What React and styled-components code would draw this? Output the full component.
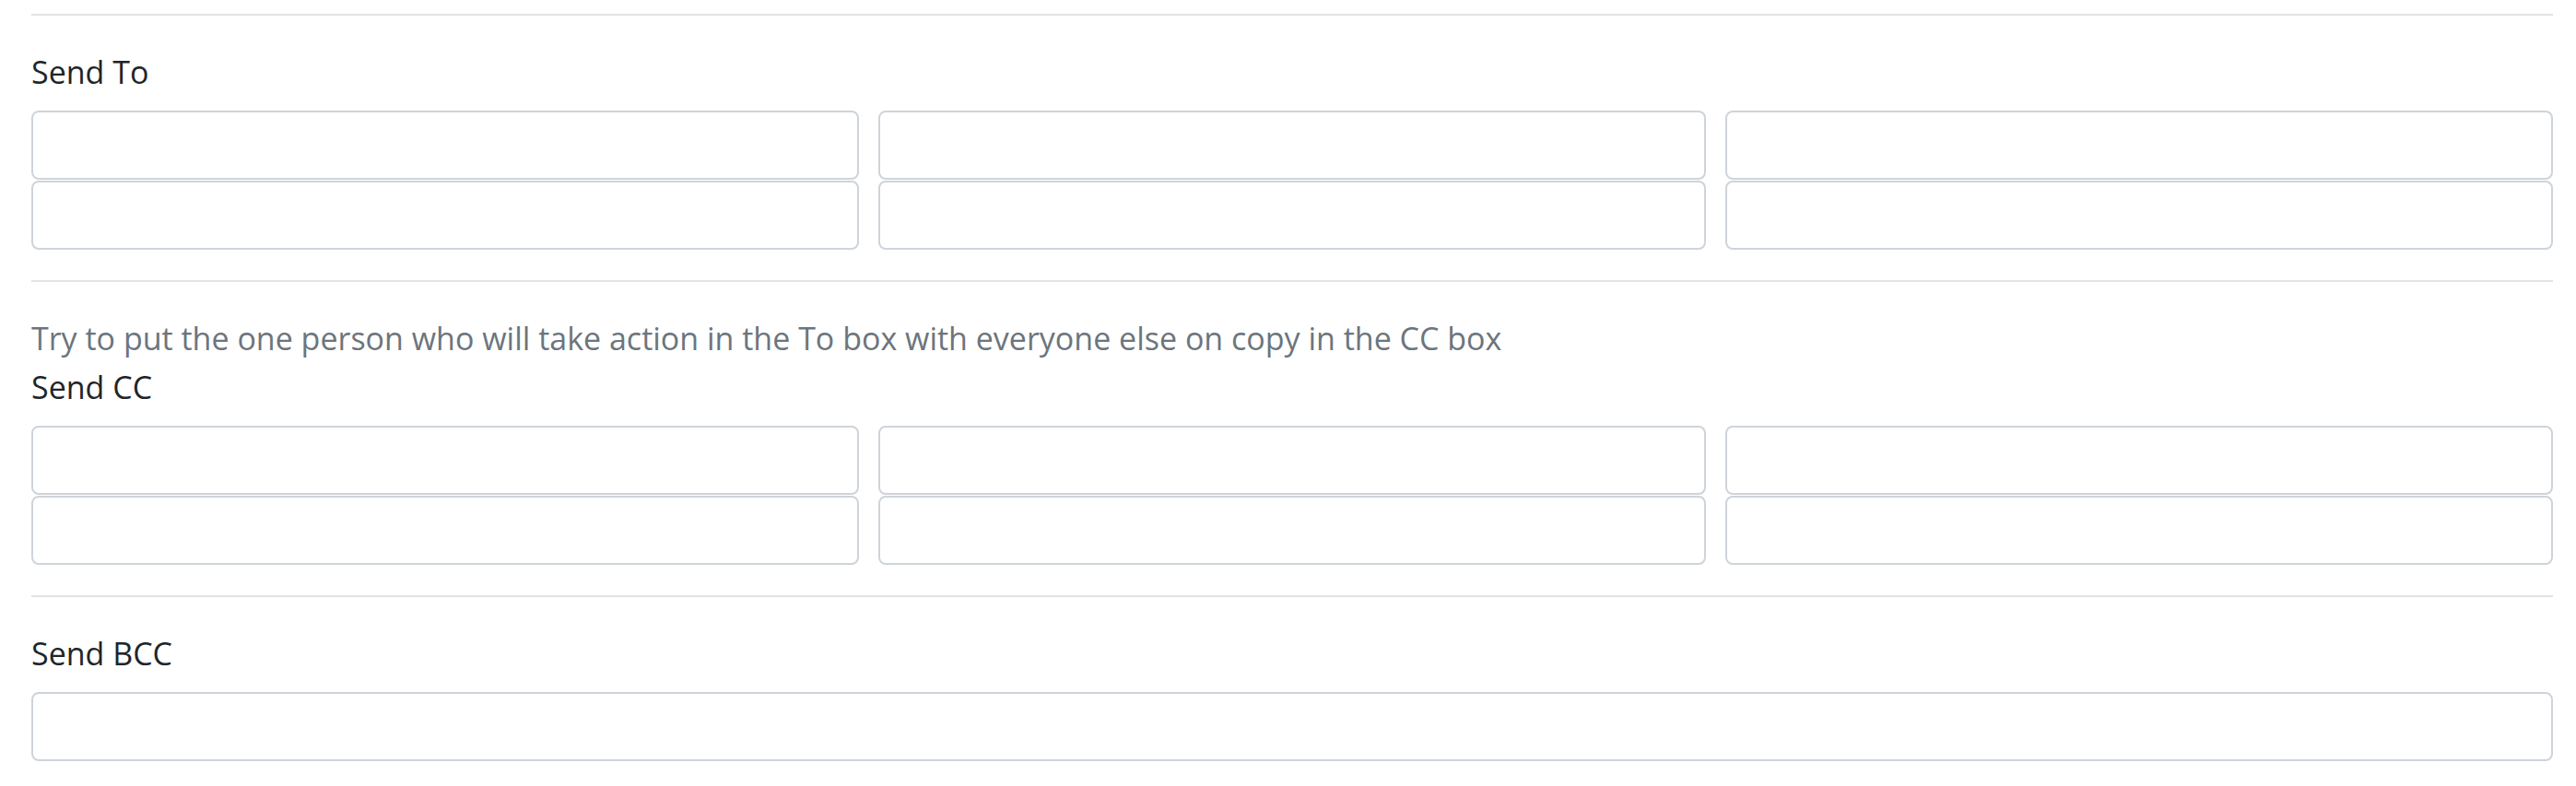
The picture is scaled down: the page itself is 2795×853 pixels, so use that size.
import React from "react";
import styled, { createGlobalStyle } from "styled-components";

const GlobalStyle = createGlobalStyle`
  html, body {
    margin: 0;
    padding: 0;
    background: #ffffff;
  }
  body {
    font-family: "Open Sans", "Noto Sans", sans-serif;
    color: #212529;
  }
`;

const Page = styled.div`
  width: 2736px;
  padding: 15px 0 0 34px;
`;

const Divider = styled.hr`
  margin: 0;
  border: 0;
  height: 2px;
  background: #e1e3e5;
`;

const Section = styled.section`
  padding: 38px 0 33px;
`;

const Hint = styled.div`
  font-size: 34px;
  line-height: 46px;
  color: #6c757d;
  margin-bottom: 7px;
`;

const Label = styled.label`
  display: block;
  font-size: 34px;
  line-height: 46px;
  color: #212529;
  margin-bottom: 19px;
`;

const FieldGrid = styled.div`
  display: grid;
  grid-template-columns: repeat(${(p) => p.$cols}, 1fr);
  column-gap: 21px;
  row-gap: 1px;
`;

const Input = styled.input`
  box-sizing: border-box;
  display: block;
  width: 100%;
  height: 75px;
  margin: 0;
  padding: 12px 23px;
  border: 2px solid #ced4da;
  border-radius: 8px;
  background: #ffffff;
  font: inherit;
  font-size: 34px;
  color: #212529;
  outline: none;
`;

const recipients = [
  { label: "Send To", count: 6, cols: 3 },
  {
    label: "Send CC",
    count: 6,
    cols: 3,
    hint: "Try to put the one person who will take action in the To box with everyone else on copy in the CC box",
  },
  { label: "Send BCC", count: 1, cols: 1 },
];

export default function App() {
  return (
    <>
      <GlobalStyle />
      <Page>
        {recipients.map((group) => (
          <React.Fragment key={group.label}>
            <Divider />
            <Section>
              {group.hint && <Hint>{group.hint}</Hint>}
              <Label>{group.label}</Label>
              <FieldGrid $cols={group.cols}>
                {Array.from({ length: group.count }).map((_, i) => (
                  <Input key={i} type="text" />
                ))}
              </FieldGrid>
            </Section>
          </React.Fragment>
        ))}
      </Page>
    </>
  );
}
